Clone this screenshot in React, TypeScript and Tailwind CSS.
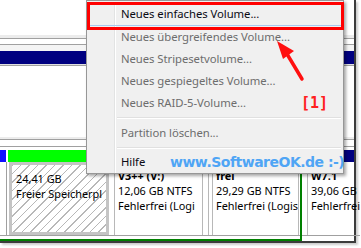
import React from "react";

const menuFont = { fontFamily: '"Noto Sans", "Open Sans", sans-serif' };

function MenuItem({ label, disabled, first }: { label: string; disabled?: boolean; first?: boolean }) {
  return (
    <div className={`flex h-[22px] ${first ? "border-b border-[#a9c9ee]" : ""}`}>
      <div className="w-[28px] border-r border-[#e2e3e3]" />
      <div className="w-px bg-white" />
      <div
        className={`flex items-center pl-[5px] text-[11.3px] tracking-[-0.05px] ${disabled ? "text-[#6d6d6d]" : "text-[#0a0a14]"}`}
      >
        {label}
      </div>
    </div>
  );
}

function Sep({ h }: { h: string }) {
  return (
    <div className={`flex ${h}`}>
      <div className="w-[28px] border-r border-[#e2e3e3]" />
      <div className="w-px bg-white" />
      <div className="flex flex-1 flex-col justify-center pl-[1px] pr-[2px]">
        <div className="h-px bg-[#e0e0e0]" />
        <div className="h-px bg-white" />
      </div>
    </div>
  );
}

function Part({ name, size, status }: { name: string; size: string; status: string }) {
  return (
    <div className="flex flex-col pt-[6px] pl-[3px] text-[10.9px] leading-[15px] text-black whitespace-nowrap overflow-hidden">
      <div className="font-bold">{name}</div>
      <div>{size}</div>
      <div>{status}</div>
    </div>
  );
}

export default function App() {
  return (
    <div className="relative h-[248px] w-[361px] overflow-hidden bg-white" style={menuFont}>
      {/* window */}
      <div className="flex h-[243px] w-[356px] flex-col border-r-2 border-b-2 border-[#3c3c3c] shadow-[2px_2px_2px_rgba(0,0,0,0.2)]">
        <div className="h-[35px]" />
        <div className="h-[3px] bg-[#ececec]" />
        <div className="h-px bg-[#a0a0a0]" />
        <div className="h-[5px]" />
        <div className="h-px bg-[#a0a0a0]" />
        <div className="h-[6px] bg-[#f4f4f4]" />
        <div className="h-[13px] bg-[#000080]" />
        <div className="h-px bg-[#e0e0e0]" />
        <div className="h-px bg-[#a0a0a0]" />
        <div className="h-[71px]" />
        <div className="h-[2px] bg-[#ececec]" />
        <div className="h-px bg-[#a0a0a0]" />
        <div className="h-[6px]" />
        <div className="h-px bg-[#a0a0a0]" />
        <div className="h-[3px]" />
        {/* bars */}
        <div className="flex h-[12px]">
          <div className="w-[6px] bg-[#1010ff]" />
          <div className="w-[2px]" />
          <div className="w-[302px] bg-[#00ff00]" />
          <div className="w-[2px]" />
          <div className="flex-1 bg-[#000080]" />
        </div>
        {/* partitions */}
        <div className="flex h-[79px]">
          <div className="flex w-[309px] flex-col border-r-2 border-b-2 border-[#008000]">
            <div className="flex h-[73px]">
              <div className="w-[7px] border-r border-[#a0a0a0]" />
              <div className="w-[2px]" />
              <div className="w-[100px] border-[3px] border-[#c4c4c4] bg-[repeating-linear-gradient(135deg,#b8b8b8_0px,#b8b8b8_1px,#ffffff_1px,#ffffff_6px)]">
                <div className="pl-[1px]">
                  <Part name="" size="24,41 GB" status="Freier Speicherpl" />
                </div>
              </div>
              <div className="w-[5px]" />
              <div className="w-[89px] border-l border-r border-[#b8b8b8]">
                <Part name="V3++ (V:)" size="12,06 GB NTFS" status="Fehlerfrei (Logi" />
              </div>
              <div className="w-[6px] border-r border-[#b8b8b8]" />
              <div className="w-[3px]" />
              <div className="flex-1 border-l border-r border-[#b8b8b8]">
                <Part name="frei" size="29,29 GB NTFS" status="Fehlerfrei (Logis" />
              </div>
              <div className="w-px" />
            </div>
            <div className="h-px bg-[#a0a0a0]" />
          </div>
          <div className="flex flex-1 flex-col">
            <div className="flex h-[73px]">
              <div className="w-[5px]" />
              <div className="flex-1 border-l border-[#b8b8b8]">
                <Part name="W7.1" size="39,06 GB" status="Fehlerfrei" />
              </div>
            </div>
            <div className="h-px bg-[#a0a0a0]" />
          </div>
        </div>
      </div>

      {/* context menu */}
      <div className="absolute left-[86px] top-0 flex h-[174px] w-[258px] flex-col border border-[#979797] bg-[#f0f0f0] pt-[3px] shadow-[2px_2px_3px_rgba(0,0,0,0.35)]">
        <MenuItem label="Neues einfaches Volume..." first />
        <MenuItem label="Neues übergreifendes Volume..." disabled />
        <MenuItem label="Neues Stripesetvolume..." disabled />
        <MenuItem label="Neues gespiegeltes Volume..." disabled />
        <MenuItem label="Neues RAID-5-Volume..." disabled />
        <Sep h="h-[8px]" />
        <MenuItem label="Partition löschen..." disabled />
        <Sep h="h-[7px]" />
        <MenuItem label="Hilfe" />
      </div>

      {/* red highlight box */}
      <div className="absolute left-[87px] top-[2px] h-[28px] w-[257px] border-[3px] border-[#ff0000]" />

      {/* red arrow */}
      <svg className="absolute left-0 top-0" width="361" height="248" viewBox="0 0 361 248">
        <line x1="287" y1="54" x2="302" y2="79" stroke="#ff1010" strokeWidth="3.5" strokeLinecap="round" />
        <polygon points="277,41 294,51 283,59" fill="#ff1010" />
      </svg>

      {/* [1] */}
      <div
        className="absolute left-[301px] top-[93px] text-[15px] font-bold leading-[20px] text-[#ff2020]"
        style={{ fontFamily: '"DejaVu Sans Mono", monospace' }}
      >
        [1]
      </div>

      {/* watermark */}
      <div
        className="absolute left-[170px] top-[152px] text-[14px] font-bold leading-[20px] tracking-[-0.5px] text-[#4fa5f5]"
        style={{ fontFamily: '"DejaVu Sans", sans-serif' }}
      >
        www.SoftwareOK.de :-)
      </div>
    </div>
  );
}
